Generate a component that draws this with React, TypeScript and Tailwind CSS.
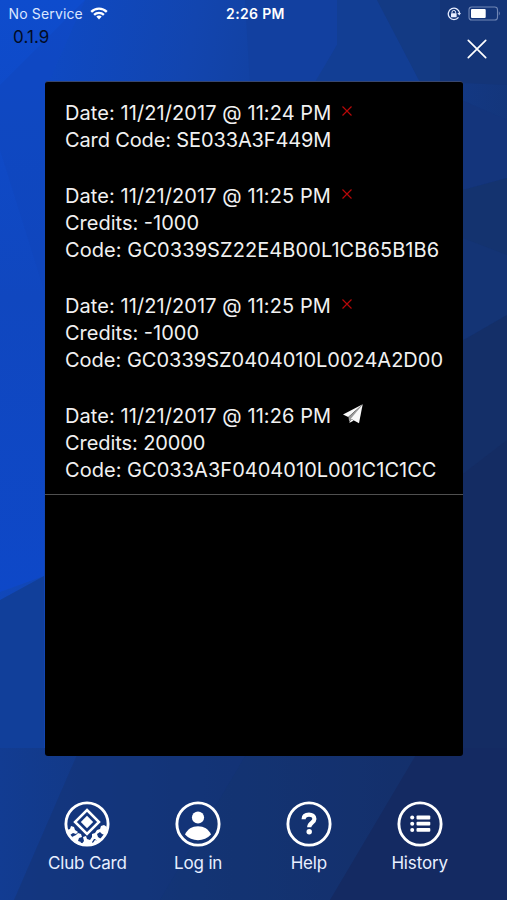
import type { ReactNode } from "react";

type Line = { text: string; tracking: string };
type Entry = { lines: Line[]; sent: boolean };

const entries: Entry[] = [
  {
    sent: false,
    lines: [
      { text: "Date: 11/21/2017 @ 11:24 PM", tracking: "tracking-[0.08px]" },
      { text: "Card Code: SE033A3F449M", tracking: "tracking-[-0.13px]" },
    ],
  },
  {
    sent: false,
    lines: [
      { text: "Date: 11/21/2017 @ 11:25 PM", tracking: "tracking-[0.08px]" },
      { text: "Credits: -1000", tracking: "tracking-[0px]" },
      { text: "Code: GC0339SZ22E4B00L1CB65B1B6", tracking: "tracking-[0.08px]" },
    ],
  },
  {
    sent: false,
    lines: [
      { text: "Date: 11/21/2017 @ 11:25 PM", tracking: "tracking-[0.08px]" },
      { text: "Credits: -1000", tracking: "tracking-[0px]" },
      { text: "Code: GC0339SZ0404010L0024A2D00", tracking: "tracking-[0px]" },
    ],
  },
  {
    sent: true,
    lines: [
      { text: "Date: 11/21/2017 @ 11:26 PM", tracking: "tracking-[0.08px]" },
      { text: "Credits: 20000", tracking: "tracking-[-0.08px]" },
      { text: "Code: GC033A3F0404010L001C1C1CC", tracking: "tracking-[0.03px]" },
    ],
  },
];

function Backdrop() {
  return (
    <svg className="absolute inset-0 h-full w-full" viewBox="0 0 507 900" preserveAspectRatio="none">
      <defs>
        <linearGradient id="base" x1="0" y1="0" x2="1" y2="0.35">
          <stop offset="0" stopColor="#0d4bcb" />
          <stop offset="0.35" stopColor="#1245af" />
          <stop offset="0.65" stopColor="#123d92" />
          <stop offset="1" stopColor="#143476" />
        </linearGradient>
        <linearGradient id="left" x1="0" y1="0" x2="0" y2="1">
          <stop offset="0" stopColor="#0e4ccd" />
          <stop offset="0.5" stopColor="#1047bf" />
          <stop offset="1" stopColor="#0e48c8" />
        </linearGradient>
        <linearGradient id="lower" x1="0" y1="0" x2="0" y2="1">
          <stop offset="0" stopColor="#113f9a" />
          <stop offset="1" stopColor="#113f9a" />
        </linearGradient>
        <linearGradient id="floor" x1="0" y1="0" x2="1" y2="0">
          <stop offset="0" stopColor="#123c92" />
          <stop offset="0.4" stopColor="#133578" />
          <stop offset="1" stopColor="#142b63" />
        </linearGradient>
      </defs>
      <rect width="507" height="900" fill="url(#base)" />
      <path d="M0 0H85L44 93V576L0 592Z" fill="url(#left)" />
      <path d="M85 0L44 93V290L0 150V85Z" fill="#1046b8" opacity="0.35" />
      <path d="M245 0H337V45L315 85H250Z" fill="#1240a0" />
      <path d="M337 0H377L420 82H315L337 45Z" fill="#123e94" />
      <path d="M377 0H440V82H420Z" fill="#133a84" />
      <path d="M440 0H507V85L440 82Z" fill="#143578" />
      <path d="M455 97L507 120V178L455 192Z" fill="#14357c" />
      <path d="M455 192L507 178V315L455 345Z" fill="#14336f" />
      <path d="M455 235L507 255V315L455 345Z" fill="#143475" />
      <path d="M455 345L507 315V900H440V480Z" fill="#142f68" />
      <path d="M455 480L507 440V900H440Z" fill="#142c63" />
      <path d="M0 600L44 576V900H0Z" fill="url(#lower)" />
      <path d="M0 748H507V900H0Z" fill="url(#floor)" />
      <path d="M80 748H250L160 900H14Z" fill="#143376" opacity="0.6" />
      <path d="M250 748H440L335 900H160Z" fill="#14326f" opacity="0.45" />
      <path d="M420 748H507V900H330Z" fill="#142a62" />
    </svg>
  );
}

function StatusBar() {
  return (
    <header className="flex h-[27px] items-center text-white">
      <div className="flex w-[169px] items-center gap-[7px] pl-[8.5px]">
        <span className="whitespace-nowrap text-[14px] leading-[27px] tracking-[0.15px] text-[#dbe6ff]">No Service</span>
        <svg width="18" height="13" viewBox="0 0 18 13" fill="none" stroke="white" strokeWidth="2.3">
          <path d="M1.2 4.9C5.5 .5 12.5 .5 16.8 4.9M4.1 7.9C6.8 5.2 11.2 5.2 13.9 7.9" />
          <path d="M6.3 9.6C7.8 8.2 10.2 8.2 11.7 9.6L9 12.4Z" fill="white" stroke="none" />
        </svg>
      </div>
      <span className="w-[173px] text-center text-[14px] font-semibold leading-[27px] tracking-[0.35px]">2:26 PM</span>
      <div className="flex flex-1 items-center justify-end gap-[7px] pr-[6px]">
        <svg width="14" height="14" viewBox="0 0 14 14" fill="none" stroke="#e7edff">
          <path d="M11.5 10.4A5.7 5.7 0 1 1 12.6 6" strokeWidth="1.3" />
          <path d="M10.3 5.9H14L12.3 8.5Z" fill="#e7edff" stroke="none" />
          <path d="M5 6.4V5.2a1.8 1.8 0 0 1 3.6 0v1.2" strokeWidth="1" />
          <rect x="4" y="6.2" width="5.6" height="4" rx=".5" fill="#e7edff" stroke="none" />
        </svg>
        <svg width="33" height="15" viewBox="0 0 33 15">
          <rect x="1" y="1" width="28.5" height="13" rx="2.8" fill="none" stroke="#7187b6" strokeWidth="1.1" />
          <rect x="3" y="3" width="14.7" height="9" rx="1" fill="white" />
          <path d="M30.8 5.3q2 2.2 0 4.4Z" fill="#7187b6" />
        </svg>
      </div>
    </header>
  );
}

function FailedMark() {
  return (
    <svg className="mb-[5px] ml-[11px]" width="10" height="10" viewBox="0 0 10 10" stroke="#b80808" strokeWidth="1.15">
      <path d="M.5 .5L9.5 9.5M9.5 .5L.5 9.5" />
    </svg>
  );
}

function PaperPlane() {
  return (
    <svg className="mb-[4px] ml-[12px]" width="20" height="20" viewBox="0 0 20 20" fill="#f8f8f8">
      <path d="M19.7.3L0 10.6L5.2 13Z" />
      <path d="M19.7.3L5.5 13L6.2 18L8.7 14.7Z" fill="#999999" />
      <path d="M19.7.3L7.8 14.7L16 19.2Z" />
      <path d="M6.2 19L8.2 15.2L10.8 16.6Z" />
    </svg>
  );
}

function RoundIcon({ children }: { children: ReactNode }) {
  return (
    <svg width="46" height="46" viewBox="0 0 46 46" fill="white">
      <circle cx="23" cy="23" r="21.1" fill="none" stroke="white" strokeWidth="2.9" />
      {children}
    </svg>
  );
}

const tabs: { label: string; icon: ReactNode }[] = [
  {
    label: "Club Card",
    icon: (
      <>
        <path d="M23 9L35 21L23 33L11 21Z" fill="none" stroke="white" strokeWidth="2.5" />
        <path d="M23 14.8L29.2 21L23 27.2L16.8 21Z" />
        <path d="M7 25l3 1 1 3 3 2-2 2-3-1-3 2-3-5 3-1Z" />
        <path d="M8 36l4-2 2-2 3 1 1 3-3 1-1 3 3 1-2 3-5-3Z" />
        <path d="M19 36l3-1 1 3 3 1 2-3 2 2-2 3 2 3-6 1-7-1 3-4Z" />
        <path d="M28 33l3-1 2-3 3-1 1-3 3-1 3 2-2 8-3-1-2-2-3 2 1 3 3 2-3 3-3-3-3 0Z" />
        <path d="M31 39l3 1-3 3-2-1Z" />
      </>
    ),
  },
  {
    label: "Log in",
    icon: (
      <>
        <circle cx="23" cy="16.5" r="6.1" />
        <path d="M10 33.5C12.5 28 17 25.2 23 25.2S33.5 28 36 33.5C32.5 37.5 28 39.2 23 39.2S13.5 37.5 10 33.5Z" />
      </>
    ),
  },
  {
    label: "Help",
    icon: (
      <>
        <path
          d="M17.6 18.2C17.6 14.9 20 13.6 23 13.6S28.4 15.2 28.4 17.9C28.4 21.5 23.2 21.7 23.2 26.3"
          fill="none"
          stroke="white"
          strokeWidth="4.2"
        />
        <circle cx="23.2" cy="30.8" r="2.7" />
      </>
    ),
  },
  {
    label: "History",
    icon: (
      <>
        {[16.5, 22.7, 28.9].map((y) => (
          <g key={y}>
            <circle cx="15.2" cy={y} r="2" />
            <rect x="19.5" y={y - 1.9} width="13.8" height="3.8" rx="1" />
          </g>
        ))}
      </>
    ),
  },
];

export default function App() {
  return (
    <div className="relative h-[900px] w-[507px] overflow-hidden bg-[#123d92] font-['Inter',sans-serif]">
      <Backdrop />
      <div className="relative flex h-full flex-col">
        <StatusBar />
        <div className="flex h-[54px] items-start justify-between pl-[13px] pr-[20px]">
          <span className="mt-px text-[17px] leading-[18px] tracking-[0.1px] text-[#030b24]">0.1.9</span>
          <svg className="mt-[12px]" width="20" height="20" viewBox="0 0 20 20" stroke="white" strokeWidth="1.7" strokeLinecap="round">
            <path d="M1.3 1.3L18.7 18.7M18.7 1.3L1.3 18.7" />
          </svg>
        </div>
        <main className="ml-[45px] h-[675px] w-[418px] overflow-hidden rounded-[3px] border-t border-[#37466f] bg-black">
          <div className="flex flex-col gap-[29px] border-b border-[#505050] pb-[10px] pl-5 pt-[17.5px] text-[#f1f1f1]">
            {entries.map((entry, index) => (
              <section key={index} className="text-[20px] leading-[27px]">
                {entry.lines.map((line, row) => (
                  <div key={row} className="flex h-[27px] items-center whitespace-nowrap">
                    <span className={line.tracking}>{line.text}</span>
                    {row === 0 && (entry.sent ? <PaperPlane /> : <FailedMark />)}
                  </div>
                ))}
              </section>
            ))}
          </div>
        </main>
        <nav className="ml-[32px] mt-[45px] grid w-[443px] grid-cols-4">
          {tabs.map((tab) => (
            <button key={tab.label} className="flex flex-col items-center text-[#e8efff]">
              <RoundIcon>{tab.icon}</RoundIcon>
              <span className="mt-[4.5px] whitespace-nowrap text-[17px] leading-[22px] tracking-[-0.15px]">{tab.label}</span>
            </button>
          ))}
        </nav>
      </div>
    </div>
  );
}
